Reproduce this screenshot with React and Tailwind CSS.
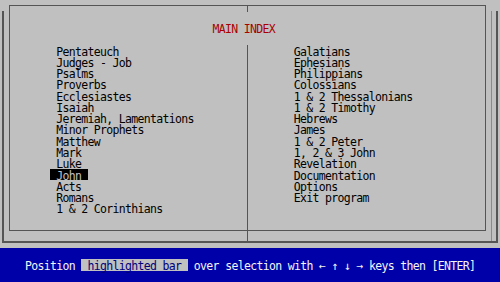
import React from "react";

const left = [
  "Pentateuch",
  "Judges - Job",
  "Psalms",
  "Proverbs",
  "Ecclesiastes",
  "Isaiah",
  "Jeremiah, Lamentations",
  "Minor Prophets",
  "Matthew",
  "Mark",
  "Luke",
  "John",
  "Acts",
  "Romans",
  "1 & 2 Corinthians",
];

const right = [
  "Galatians",
  "Ephesians",
  "Philippians",
  "Colossians",
  "1 & 2 Thessalonians",
  "1 & 2 Timothy",
  "Hebrews",
  "James",
  "1 & 2 Peter",
  "1, 2 & 3 John",
  "Revelation",
  "Documentation",
  "Options",
  "Exit program",
];

function Item({ name, active }) {
  return (
    <div className="h-[11.28px] flex">
      <span
        className={
          "block h-[11.28px] pt-[1.5px] whitespace-pre " +
          (active ? "bg-black text-[#c0c0c0]" : "text-black")
        }
      >
        {" " + name + " "}
      </span>
    </div>
  );
}

export default function App() {
  return (
    <div className="w-[500px] h-[282px] bg-[#c0c0c0] overflow-hidden flex flex-col font-['DejaVu_Sans_Mono',monospace] text-[11.5px] tracking-[-0.67px] leading-[11.28px]">
      <div className="h-[248px] pt-[11px] pl-[2px]">
        <div className="w-[496px] h-[232px] border-l-2 border-r-2 border-b-2 border-[#555555] flex items-start">
          <div className="relative ml-[5px] -mt-[6px] w-[477px] h-[226px] border border-[#555555] flex flex-col">
            <div className="absolute left-[237px] top-0 w-px h-[6px] bg-[#555555]" />
            <div className="absolute left-[237px] top-[39px] w-px h-[198px] bg-[#555555]" />
            <div className="pt-[18px] pl-[202.5px] h-[27.8px] text-[#a80000] whitespace-pre">
              MAIN INDEX
            </div>
            <div className="mt-[11.3px] grid grid-cols-[277.5px_1fr]">
              <div className="pl-[40px]">
                {left.map((n) => (
                  <Item key={n} name={n} active={n === "John"} />
                ))}
              </div>
              <div>
                {right.map((n) => (
                  <Item key={n} name={n} />
                ))}
              </div>
            </div>
          </div>
          <div className="ml-[5px] w-px h-[230px] bg-[#8a8a8a]" />
        </div>
      </div>
      <div className="h-[34px] bg-[#0000a8] pt-[11.4px] pl-[25px] text-[#f4f4f4] whitespace-pre">
        <span className="inline-block h-[11.28px] pt-[1.5px] align-top">Position </span>
        <span className="inline-block h-[11.28px] pt-[1.5px] align-top bg-[#c0c0c0] text-[#00007a]"> highlighted bar </span>
        <span className="inline-block h-[11.28px] pt-[1.5px] align-top"> over selection with ← ↑ ↓ → keys then [ENTER]</span>
      </div>
    </div>
  );
}
